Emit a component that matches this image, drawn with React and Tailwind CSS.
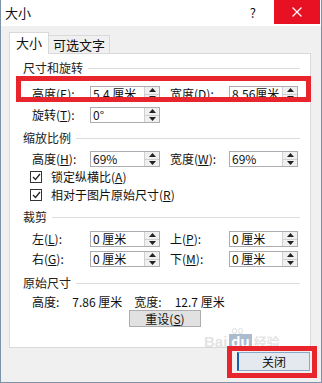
import React from "react";

const FONT = { fontFamily: '"Noto Sans CJK SC", "Noto Sans", sans-serif' };

function Key({ k }) {
    return <>(<u>{k}</u>)</>;
}

function Spin({ value, w = "w-[70px]" }) {
    return (
        <div className={`${w} h-[16px] border border-[#abadb3] bg-white flex items-stretch`}>
            <div className="flex-1 pl-[2px] text-[12px] leading-[14px] whitespace-pre">{value}</div>
            <div className="w-[15px] border-l border-[#d0d0d0] bg-[#f0f0f0] flex flex-col">
                <div className="flex-1 flex items-center justify-center border-b border-[#cfcfcf]">
                    <svg width="7" height="4" viewBox="0 0 7 4"><path d="M0 4 L3.5 0 L7 4 Z" fill="#222" /></svg>
                </div>
                <div className="flex-1 flex items-center justify-center">
                    <svg width="7" height="4" viewBox="0 0 7 4"><path d="M0 0 L3.5 4 L7 0 Z" fill="#222" /></svg>
                </div>
            </div>
        </div>
    );
}

function Header({ label, className = "" }) {
    return (
        <div className={`flex items-center pl-[13px] pr-[10px] h-[14px] ${className}`}>
            <span className="text-[12px] leading-[14px] text-[#222] whitespace-nowrap">{label}</span>
            <div className="flex-1 ml-[5px] h-px bg-[#dcdcdc]" />
        </div>
    );
}

function Row({ l1, v1, l2, v2, className = "" }) {
    return (
        <div className={`flex items-center pl-[22px] h-[16px] ${className}`}>
            <span className="w-[58px] text-[12px] leading-[14px] whitespace-nowrap">{l1}</span>
            <Spin value={v1} />
            {l2 && (
                <>
                    <span className="w-[59px] ml-[10px] text-[12px] leading-[14px] whitespace-nowrap">{l2}</span>
                    <Spin value={v2} w="w-[69px]" />
                </>
            )}
        </div>
    );
}

function Check({ children, className = "" }) {
    return (
        <div className={`flex items-center pl-[20px] h-[18px] ${className}`}>
            <div className="w-[12px] h-[12px] border border-[#333] bg-white flex items-center justify-center">
                <svg width="9" height="8" viewBox="0 0 9 8"><path d="M1 4 L3.5 6.5 L8 1" stroke="#222" strokeWidth="1.3" fill="none" /></svg>
            </div>
            <span className="ml-[9px] text-[12px] leading-[14px] whitespace-nowrap">{children}</span>
        </div>
    );
}

export default function App() {
    return (
        <div className="w-[322px] h-[383px] bg-[#f0f0f0] border-x border-b border-[#7d92a8] relative overflow-hidden flex flex-col text-[#111]" style={FONT}>
            {/* title bar */}
            <div className="h-[26px] bg-white flex items-start shrink-0">
                <span className="pl-[4px] pt-[5px] text-[13px] leading-[15px]">大小</span>
                <span className="ml-auto mr-[18px] pt-[5px] text-[13px] leading-[15px]">?</span>
                <div className="w-[46px] h-[24px] bg-[#e81123] flex items-center justify-center mr-[1px]">
                    <svg width="10" height="10" viewBox="0 0 10 10"><path d="M0.5 0.5 L9.5 9.5 M9.5 0.5 L0.5 9.5" stroke="#fff" strokeWidth="1.2" /></svg>
                </div>
            </div>

            {/* body */}
            <div className="pl-[8px] pr-[10px]">
                <div className="flex items-end h-[21px] mt-[6px]">
                    <div className="h-[22px] mb-[-1px] relative z-10 bg-white border border-b-0 border-[#d9d9d9] px-[6px] text-[13px] leading-[20px] whitespace-nowrap">大小</div>
                    <div className="h-[18px] border border-l-0 border-b-0 border-[#d9d9d9] bg-[#f0f0f0] px-[4px] text-[13px] leading-[17px] whitespace-nowrap">可选文字</div>
                </div>

                <div className="h-[295px] bg-white border border-[#d9d9d9] pt-[7px]">
                    <Header label="尺寸和旋转" />
                    <Row className="mt-[11px]" l1={<>高度<Key k="E" />:</>} v1="5.4 厘米" l2={<>宽度<Key k="D" />:</>} v2="8.56厘米" />
                    <Row className="mt-[5px]" l1={<>旋转<Key k="T" />:</>} v1="0°" />

                    <Header label="缩放比例" className="mt-[8px]" />
                    <Row className="mt-[6px]" l1={<>高度<Key k="H" />:</>} v1="69%" l2={<>宽度<Key k="W" />:</>} v2="69%" />
                    <Check className="mt-[1px]">锁定纵横比<Key k="A" /></Check>
                    <Check>相对于图片原始尺寸<Key k="R" /></Check>

                    <Header label="裁剪" className="mt-[6px]" />
                    <Row className="mt-[7px]" l1={<>左<Key k="L" />:</>} v1="0 厘米" l2={<>上<Key k="P" />:</>} v2="0 厘米" />
                    <Row className="mt-[4px]" l1={<>右<Key k="G" />:</>} v1="0 厘米" l2={<>下<Key k="M" />:</>} v2="0 厘米" />

                    <Header label="原始尺寸" className="mt-[9px]" />
                    <div className="flex items-center pl-[22px] mt-[5px] h-[14px] text-[12px] leading-[14px] whitespace-nowrap">
                        <span>高度:</span>
                        <span className="ml-[13px]">7.86 厘米</span>
                        <span className="ml-[12px]">宽度:</span>
                        <span className="ml-[13px]">12.7 厘米</span>
                    </div>
                    <div className="flex justify-center mt-[1px]">
                        <div className="w-[72px] h-[17px] ml-[10px] bg-[#e1e1e1] border border-[#adadad] text-[12px] leading-[15px] text-center">
                            重设<Key k="S" />
                        </div>
                    </div>
                </div>

                <div className="flex justify-end mt-[4px]">
                    <div className="w-[73px] h-[19px] mr-[1px] bg-[#e3e9ef] border border-[#8aa8c8] border-l-[2px] border-l-[#1a5fa8] text-[12px] leading-[17px] text-center">
                        关闭
                    </div>
                </div>
            </div>

            {/* watermark */}
            <div className="absolute left-[203px] top-[328px] opacity-70 pointer-events-none">
                <div className="flex items-end gap-[1px] ml-[28px]">
                    <div className="w-[5px] h-[6px] rounded-full border border-[#cfcfcf]" />
                    <div className="w-[5px] h-[6px] rounded-full border border-[#cfcfcf]" />
                </div>
                <div className="flex items-center text-[15px] font-bold leading-[16px] text-[#d8d8d8]" style={{ fontFamily: '"Liberation Sans", sans-serif' }}>
                    <span>Bai</span>
                    <span className="bg-[#8aa0bb] text-white px-[2px] ml-[2px]">du</span>
                    <span className="ml-[2px] text-[13px]" style={FONT}>经验</span>
                </div>
            </div>

            {/* red annotation boxes */}
            <div className="absolute left-[15px] top-[76px] w-[295px] h-[26px] border-[5px] border-[#e8242c] pointer-events-none" />
            <div className="absolute left-[226px] top-[346px] w-[90px] h-[32px] border-[5px] border-[#e8242c] pointer-events-none" />
        </div>
    );
}
